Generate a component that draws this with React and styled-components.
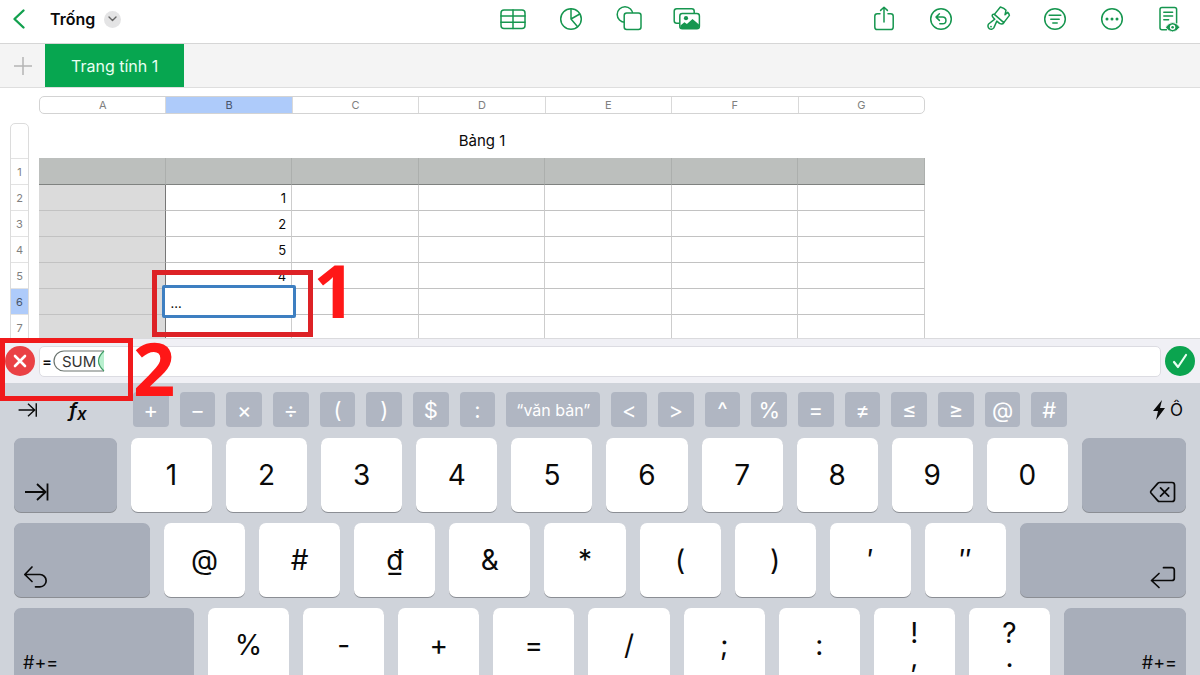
import React, { useState } from "react";
import styled, { createGlobalStyle, css } from "styled-components";

const GlobalStyle = createGlobalStyle`
  * { box-sizing: border-box; }
  body {
    margin: 0;
    background: #fff;
    color: #0a0a0a;
    font-family: Inter, "Noto Sans", "Liberation Sans", sans-serif;
  }
  button, input { font: inherit; color: inherit; }
`;

const plainButton = css`
  display: flex;
  align-items: center;
  justify-content: center;
  padding: 0;
  border: 0;
  background: none;
  cursor: pointer;
`;

const App = styled.main`
  display: flex;
  flex-direction: column;
  height: 100vh;
  overflow: hidden;
`;

/* ---------- header ---------- */

const Header = styled.header`
  flex: none;
  display: grid;
  grid-template-columns: 1fr auto 1fr;
  align-items: center;
  height: 44px;
  padding: 0 12px 5px;
  border-bottom: 1px solid #d6d6d6;
`;

const DocumentInfo = styled.div`
  display: flex;
  align-items: center;
`;

const BackButton = styled.button`
  ${plainButton}
  width: 14px;
  margin-right: 24px;
`;

const DocumentTitle = styled.h1`
  margin: 0 9px 0 0;
  font-size: 16px;
  font-weight: 600;
  line-height: 24px;
`;

const TitleMenuButton = styled.button`
  ${plainButton}
  width: 17px;
  height: 17px;
  border-radius: 50%;
  background: #e4e4e5;
`;

const IconGroup = styled.div`
  display: flex;
  gap: ${(p) => p.$gap}px;
  justify-content: flex-end;
  margin-right: ${(p) => p.$end || 0}px;
`;

const IconButton = styled.button`
  ${plainButton}
  width: 28px;
  height: 28px;
  color: #16964f;
`;

/* ---------- tabs ---------- */

const TabBar = styled.nav`
  flex: none;
  display: flex;
  height: 44px;
  background: #f4f4f4;
  border-bottom: 1px solid #dedede;
`;

const AddSheetButton = styled.button`
  ${plainButton}
  width: 45px;
`;

const SheetTab = styled.button`
  ${plainButton}
  padding: 0 26px;
  background: #07a650;
  color: #e9fff2;
  font-size: 16px;
`;

/* ---------- sheet ---------- */

const Sheet = styled.section`
  flex: none;
  max-height: 250px;
  overflow: hidden;
  padding-top: 8px;
`;

const ColumnStrip = styled.div`
  display: flex;
  height: 18px;
  margin: 0 275px 9px 39px;
  border: 1px solid #d3d3d3;
  border-radius: 5px;
`;

const ColumnLabel = styled.div`
  flex: 1;
  display: flex;
  align-items: center;
  justify-content: center;
  font-size: 11px;
  color: ${(p) => (p.$active ? "#47546b" : "#808080")};
  background: ${(p) => (p.$active ? "#aecbfa" : "transparent")};
  & + & { border-left: 1px solid #d9d9d9; }
`;

const SheetBody = styled.div`
  display: flex;
  gap: 10px;
  padding: 0 275px 0 10px;
`;

const RowStrip = styled.div`
  flex: none;
  width: 19px;
  padding-top: 34px;
  border: 1px solid #dcdcdc;
  border-radius: 5px 5px 0 0;
`;

const RowLabel = styled.div`
  display: flex;
  align-items: center;
  justify-content: center;
  height: 26px;
  border-top: 1px solid #e2e2e2;
  font-size: 11px;
  color: ${(p) => (p.$active ? "#47546b" : "#808080")};
  background: ${(p) => (p.$active ? "#aecbfa" : "transparent")};
`;

const TableArea = styled.div`
  flex: 1;
  min-width: 0;
`;

const Table = styled.table`
  width: 100%;
  table-layout: fixed;
  border-collapse: separate;
  border-spacing: 0;
  font-size: 13px;
`;

const TableTitle = styled.caption`
  height: 35px;
  font-size: 15px;
  line-height: 36px;
`;

const cell = css`
  position: relative;
  height: 26px;
  padding: 0 5px 0 8px;
  border-bottom: 1px solid #c2c2c2;
  border-right: 1px solid #cdcdcd;
  text-align: right;
  line-height: 18px;
`;

const HeadCell = styled.th`
  ${cell}
  height: 27px;
  background: #bcbfbd;
  border-bottom-color: #7f8280;
  border-right-color: #acafad;
`;

const SideCell = styled.th`
  ${cell}
  background: #dbdbdb;
  border-right-color: #777;
`;

const Cell = styled.td`
  ${cell}
`;

const Selection = styled.div`
  position: absolute;
  inset: -4px -5px -4px -4px;
  display: flex;
  align-items: center;
  padding: 2px 6px 0;
  border: 3px solid #3e7fc1;
  border-radius: 2px;
  background: #fff;
  z-index: 1;
`;

/* ---------- callouts ---------- */

const CalloutBox = styled.div`
  position: absolute;
  z-index: 2;
  border: 5px solid ${(p) => p.$color};
  pointer-events: none;
`;

const CellCallout = styled(CalloutBox)`
  inset: -19px -22px -23px -14px;
`;

const FormulaCallout = styled(CalloutBox)`
  top: -1px;
  left: 0;
  width: 133px;
  height: 63px;
`;

const CalloutNumber = styled.span`
  position: absolute;
  top: ${(p) => p.$top}px;
  left: 100%;
  margin-left: 5px;
  font-family: "Open Sans", sans-serif;
  font-size: 74px;
  font-weight: 700;
  line-height: 74px;
  color: #ff1717;
`;

/* ---------- formula bar ---------- */

const FormulaBar = styled.form`
  position: relative;
  flex: none;
  display: flex;
  align-items: center;
  gap: 4px;
  height: 45px;
  padding: 0 5px;
  border-top: 1px solid #dadadd;
  background: #f0f0f5;
`;

const RoundButton = styled.button`
  ${plainButton}
  flex: none;
  width: 30px;
  height: 30px;
  border-radius: 50%;
  background: ${(p) => p.$color};
`;

const FormulaField = styled.div`
  flex: 1;
  display: flex;
  align-items: center;
  height: 31px;
  padding-left: 2px;
  border: 1px solid #dcdce2;
  border-radius: 5px;
  background: #fff;
  font-size: 15px;
`;

const EqualsSign = styled.span`
  width: 11px;
  font-weight: 500;
`;

const FunctionToken = styled.span`
  position: relative;
  display: flex;
  align-items: center;
  width: 52px;
  height: 22px;
  padding-left: 9px;
  color: #333;
`;

const TokenShape = styled.svg`
  position: absolute;
  inset: 0;
`;

const FormulaInput = styled.input`
  flex: 1;
  min-width: 0;
  border: 0;
  outline: 0;
  background: none;
`;

/* ---------- keyboard ---------- */

const Keyboard = styled.section`
  flex: 1;
  min-height: 0;
  overflow: hidden;
  display: flex;
  flex-direction: column;
  gap: 11px;
  padding: 9px 14px 0;
  background: #cfd3da;
`;

const ShortcutRow = styled.div`
  display: grid;
  grid-template-columns: 119px 1fr 119px;
  align-items: center;
`;

const Tools = styled.div`
  display: flex;
  align-items: center;
  gap: 30px;
  padding: 0 3px;
  justify-content: ${(p) => (p.$end ? "flex-end" : "flex-start")};
`;

const ToolButton = styled.button`
  ${plainButton}
  font-size: 17px;
  gap: 4px;
`;

const FunctionGlyph = styled.i`
  font-size: 20px;
  font-weight: 600;
  line-height: 24px;
  sub {
    font-size: 17px;
    line-height: 0;
    vertical-align: -3px;
  }
`;

const Shortcuts = styled.div`
  display: flex;
  gap: 11px;
`;

const ShortcutKey = styled.button`
  ${plainButton}
  flex: ${(p) => (p.$wide ? "0 0 94px" : "1 1 0")};
  min-width: 0;
  height: 35px;
  border-radius: 4px;
  background: #b0b6c2;
  color: #fff;
  font-size: ${(p) => (p.$wide ? 16 : 22)}px;
`;

const KeyRow = styled.div`
  flex: none;
  display: flex;
  gap: 14px;
`;

const Key = styled.button`
  ${plainButton}
  flex: 1 1 0;
  flex-direction: column;
  min-width: 0;
  height: 74px;
  border-radius: 7px;
  background: #fff;
  box-shadow: 0 1px 0 #8b8e94;
  font-size: 28px;
  line-height: 24px;
`;

const SideKey = styled(Key)`
  flex: 0 0 ${(p) => p.$width}px;
  align-items: ${(p) => (p.$end ? "flex-end" : "flex-start")};
  justify-content: flex-end;
  padding: 0 9px 6px;
  background: #a8aeba;
  font-size: 18px;
  line-height: 26px;
`;

/* ---------- icons ---------- */

const Icon = ({ size = 28, width = 1.5, children }) => (
  <svg
    width={size}
    height={size}
    viewBox="0 0 28 28"
    fill="none"
    stroke="currentColor"
    strokeWidth={width}
    strokeLinecap="round"
    strokeLinejoin="round"
    aria-hidden="true"
  >
    {children}
  </svg>
);

const insertIcons = [
  ["Bảng", <>
    <rect x="2" y="5" width="24" height="18.5" rx="3" />
    <path d="M14 5v18.5M2 11h24M2 17.2h24" />
  </>],
  ["Biểu đồ", <>
    <circle cx="14" cy="14" r="10.3" />
    <path d="M14 3.7V14l8.8-5M14 14l6.6 7.8" />
  </>],
  ["Hình", <>
    <circle cx="10" cy="9.5" r="7.8" />
    <rect x="9.2" y="8" width="16.8" height="16.6" rx="2.5" fill="#fff" />
  </>],
  ["Ảnh", <>
    <rect x="1.2" y="3.8" width="20" height="14.5" rx="2.5" />
    <rect x="6.8" y="8.4" width="19.6" height="15.4" rx="2.5" fill="#fff" />
    <circle cx="13" cy="13.2" r="2.1" fill="currentColor" stroke="none" />
    <path d="M7.4 20.5l4-3.3 2.5 1.8 5.6-5 6.5 5.5v2q0 2-2 2H9.4q-2 0-2-2z" fill="currentColor" stroke="none" />
  </>],
];

const actionIcons = [
  ["Chia sẻ", <>
    <path d="M10 8.7H7.3q-2.5 0-2.5 2.5V22q0 2.6 2.5 2.6h13.4q2.5 0 2.5-2.6V11.2q0-2.5-2.5-2.5H18" />
    <path d="M14 17V2.2M10.6 5.4L14 2.2l3.4 3.2" />
  </>],
  ["Hoàn tác", <>
    <circle cx="14" cy="14" r="10.3" />
    <path d="M12.4 8.8L9 12.1l3.4 3.3M9 12.1h6.6a3.3 3.3 0 0 1 0 6.7h-2.8" />
  </>],
  ["Định dạng", <>
    <path d="M16.4 2L10.400 9.400l9.400 8.200 5.600-7.200q-.3-1.700-1.700-3l-2.700 2.400 1-4.600q-1.600-2.200-5.600-3.200z" />
    <path d="M10.400 9.400q-1.800-.6-2.200 1-.2 1.400 2.600 3.800L4.600 19a3.200 3.200 0 1 0 5.200 3.900l3-6.800q2.800 2.800 4.700 3 1.600 0 2.300-1.500" />
    <circle cx="7" cy="21.600" r=".9" fill="currentColor" stroke="none" />
  </>],
  ["Sắp xếp", <>
    <circle cx="14" cy="14" r="10.3" />
    <path d="M8.2 10.3h11.6M9.8 14.2h8.4M11.8 18.1h4.4" />
  </>],
  ["Thêm", <>
    <circle cx="14" cy="14" r="10.3" />
    <g fill="currentColor" stroke="none">
      <circle cx="9" cy="14" r="1.5" />
      <circle cx="14" cy="14" r="1.5" />
      <circle cx="19" cy="14" r="1.5" />
    </g>
  </>],
  ["Chế độ đọc", <>
    <path d="M11.5 24.8H7q-2 0-2-2V4.5q0-2 2-2h12.6q2 0 2 2V18" />
    <path d="M8.8 7.3h8.8M8.8 11h8.8M8.8 14.7h4.8" />
    <path d="M10.4 22.3q3.2-4.8 7.2-4.8t7.2 4.8q-3.2 4.6-7.2 4.6t-7.2-4.6z" fill="currentColor" stroke="#fff" strokeWidth=".8" />
    <circle cx="17.6" cy="22.3" r="2.7" fill="#fff" stroke="none" />
    <circle cx="17.6" cy="22.3" r="1.3" fill="currentColor" stroke="none" />
  </>],
];

const TabArrow = ({ size = 28 }) => (
  <Icon size={size} width={1.8}>
    <path d="M2 14h21M14 6l8.5 8-8.5 8M24.5 5.5v17" strokeLinecap="butt" />
  </Icon>
);

/* ---------- data ---------- */

const columns = ["A", "B", "C", "D", "E", "F", "G"];
const values = { 2: "1", 3: "2", 4: "5", 5: "4" };
const rows = [2, 3, 4, 5, 6, 7];
const shortcuts = ["+", "−", "×", "÷", "(", ")", "$", ":", "“văn bản”", "<", ">", "^", "%", "=", "≠", "≤", "≥", "@", "#"];
const digits = ["1", "2", "3", "4", "5", "6", "7", "8", "9", "0"];
const symbols = ["@", "#", "₫", "&", "*", "(", ")", "′", "″"];
const punctuation = ["%", "-", "+", "=", "/", ";", ":"];

export default function SpreadsheetScreen() {
  const [formula, setFormula] = useState("");

  return (
    <App>
      <GlobalStyle />
      <Header>
        <DocumentInfo>
          <BackButton aria-label="Quay lại">
            <svg width="14" height="22" viewBox="0 0 14 22" fill="none" stroke="#12a04e" strokeWidth="2.4" strokeLinecap="round" strokeLinejoin="round">
              <path d="M11.5 2.5L2.5 11l9 8.5" />
            </svg>
          </BackButton>
          <DocumentTitle>Trống</DocumentTitle>
          <TitleMenuButton aria-label="Tùy chọn tài liệu">
            <svg width="9" height="6" viewBox="0 0 9 6" fill="none" stroke="#666" strokeWidth="1.4" strokeLinecap="round" strokeLinejoin="round">
              <path d="M1 1l3.5 3.5L8 1" />
            </svg>
          </TitleMenuButton>
        </DocumentInfo>
        <IconGroup $gap={30}>
          {insertIcons.map(([label, art]) => (
            <IconButton key={label} aria-label={label}><Icon>{art}</Icon></IconButton>
          ))}
        </IconGroup>
        <IconGroup $gap={29} $end={5}>
          {actionIcons.map(([label, art]) => (
            <IconButton key={label} aria-label={label}><Icon>{art}</Icon></IconButton>
          ))}
        </IconGroup>
      </Header>

      <TabBar>
        <AddSheetButton aria-label="Thêm trang tính">
          <svg width="18" height="18" viewBox="0 0 18 18" stroke="#b4b4b4" strokeWidth="1.5">
            <path d="M9 0v18M0 9h18" />
          </svg>
        </AddSheetButton>
        <SheetTab>Trang tính 1</SheetTab>
      </TabBar>

      <Sheet>
        <ColumnStrip>
          {columns.map((c) => <ColumnLabel key={c} $active={c === "B"}>{c}</ColumnLabel>)}
        </ColumnStrip>
        <SheetBody>
          <RowStrip>
            {[1, ...rows].map((r) => <RowLabel key={r} $active={r === 6}>{r}</RowLabel>)}
          </RowStrip>
          <TableArea>
            <Table>
              <TableTitle>Bảng 1</TableTitle>
              <thead>
                <tr>{columns.map((c) => <HeadCell key={c} />)}</tr>
              </thead>
              <tbody>
                {rows.map((r) => (
                  <tr key={r}>
                    <SideCell />
                    {columns.slice(1).map((c) => (
                      <Cell key={c}>
                        {c === "B" && values[r]}
                        {c === "B" && r === 6 && (
                          <>
                            <Selection>...</Selection>
                            <CellCallout $color="#dd2226">
                              <CalloutNumber $top={-22}>1</CalloutNumber>
                            </CellCallout>
                          </>
                        )}
                      </Cell>
                    ))}
                  </tr>
                ))}
              </tbody>
            </Table>
          </TableArea>
        </SheetBody>
      </Sheet>

      <FormulaBar onSubmit={(e) => e.preventDefault()}>
        <RoundButton type="button" $color="#ea4145" aria-label="Hủy">
          <svg width="14" height="14" viewBox="0 0 14 14" stroke="#fff" strokeWidth="2.6" strokeLinecap="round">
            <path d="M2 2l10 10M12 2L2 12" />
          </svg>
        </RoundButton>
        <FormulaField>
          <EqualsSign>=</EqualsSign>
          <FunctionToken>
            <TokenShape width="52" height="22" viewBox="0 0 52 22" fill="none">
              <path d="M51 1q-11 10 0 20z" fill="#b9f0cf" />
              <path d="M51 1H11a10 10 0 0 0 0 20h40" stroke="#6c7570" strokeWidth="1.2" />
              <path d="M51 1q-11 10 0 20" stroke="#3f9c66" strokeWidth="1.2" />
            </TokenShape>
            SUM
          </FunctionToken>
          <FormulaInput aria-label="Công thức" value={formula} onChange={(e) => setFormula(e.target.value)} />
        </FormulaField>
        <RoundButton type="submit" $color="#0ba44f" aria-label="Xong">
          <svg width="16" height="16" viewBox="0 0 16 16" fill="none" stroke="#e8fff1" strokeWidth="2.2" strokeLinecap="round" strokeLinejoin="round">
            <path d="M2 9l4 5 8-12" />
          </svg>
        </RoundButton>
        <FormulaCallout $color="#f01a1c">
          <CalloutNumber $top={-12}>2</CalloutNumber>
        </FormulaCallout>
      </FormulaBar>

      <Keyboard>
        <ShortcutRow>
          <Tools>
            <ToolButton aria-label="Ô tiếp theo"><TabArrow size={22} /></ToolButton>
            <ToolButton aria-label="Hàm"><FunctionGlyph>f<sub>x</sub></FunctionGlyph></ToolButton>
          </Tools>
          <Shortcuts>
            {shortcuts.map((s) => <ShortcutKey key={s} $wide={s.length > 1}>{s}</ShortcutKey>)}
          </Shortcuts>
          <Tools $end>
            <ToolButton>
              <svg width="14" height="20" viewBox="0 0 14 20" fill="#0a0a0a" aria-hidden="true">
                <path d="M10 0L1 11h5L4 20l9-12H8z" />
              </svg>
              Ô
            </ToolButton>
          </Tools>
        </ShortcutRow>

        <KeyRow>
          <SideKey $width={103} aria-label="Tab"><TabArrow /></SideKey>
          {digits.map((k) => <Key key={k}>{k}</Key>)}
          <SideKey $width={104} $end aria-label="Xóa">
            <Icon width={1.7}>
              <path d="M10.5 4.5H23q2.5 0 2.5 2.5v14q0 2.5-2.5 2.5H10.5q-1 0-1.8-.9L2 15q-.8-1 0-2l6.7-7.6q.8-.9 1.8-.9z" />
              <path d="M11.5 9.8l8.2 8.4M19.700 9.800l-8.200 8.400" />
            </Icon>
          </SideKey>
        </KeyRow>

        <KeyRow>
          <SideKey $width={136} aria-label="Hoàn tác">
            <Icon width={1.7}>
              <path d="M9 4L1.8 11.5 9 18.5M1.8 11.5h15.2a6 6 0 0 1 0 12.300h-4.500" />
            </Icon>
          </SideKey>
          {symbols.map((k) => <Key key={k}>{k}</Key>)}
          <SideKey $width={166} $end aria-label="Xuống dòng">
            <Icon width={1.7}>
              <path d="M10 10.5L2.5 17.5l7.5 7M2.5 17.5H23q2.300 0 2.300-2.300V7q0-2.300-2.300-2.300h-8.500" />
            </Icon>
          </SideKey>
        </KeyRow>

        <KeyRow>
          <SideKey $width={180}>#+=</SideKey>
          {punctuation.map((k) => <Key key={k}>{k}</Key>)}
          <Key><span>!</span><span>,</span></Key>
          <Key><span>?</span><span>.</span></Key>
          <SideKey $width={122} $end>#+=</SideKey>
        </KeyRow>
      </Keyboard>
    </App>
  );
}
